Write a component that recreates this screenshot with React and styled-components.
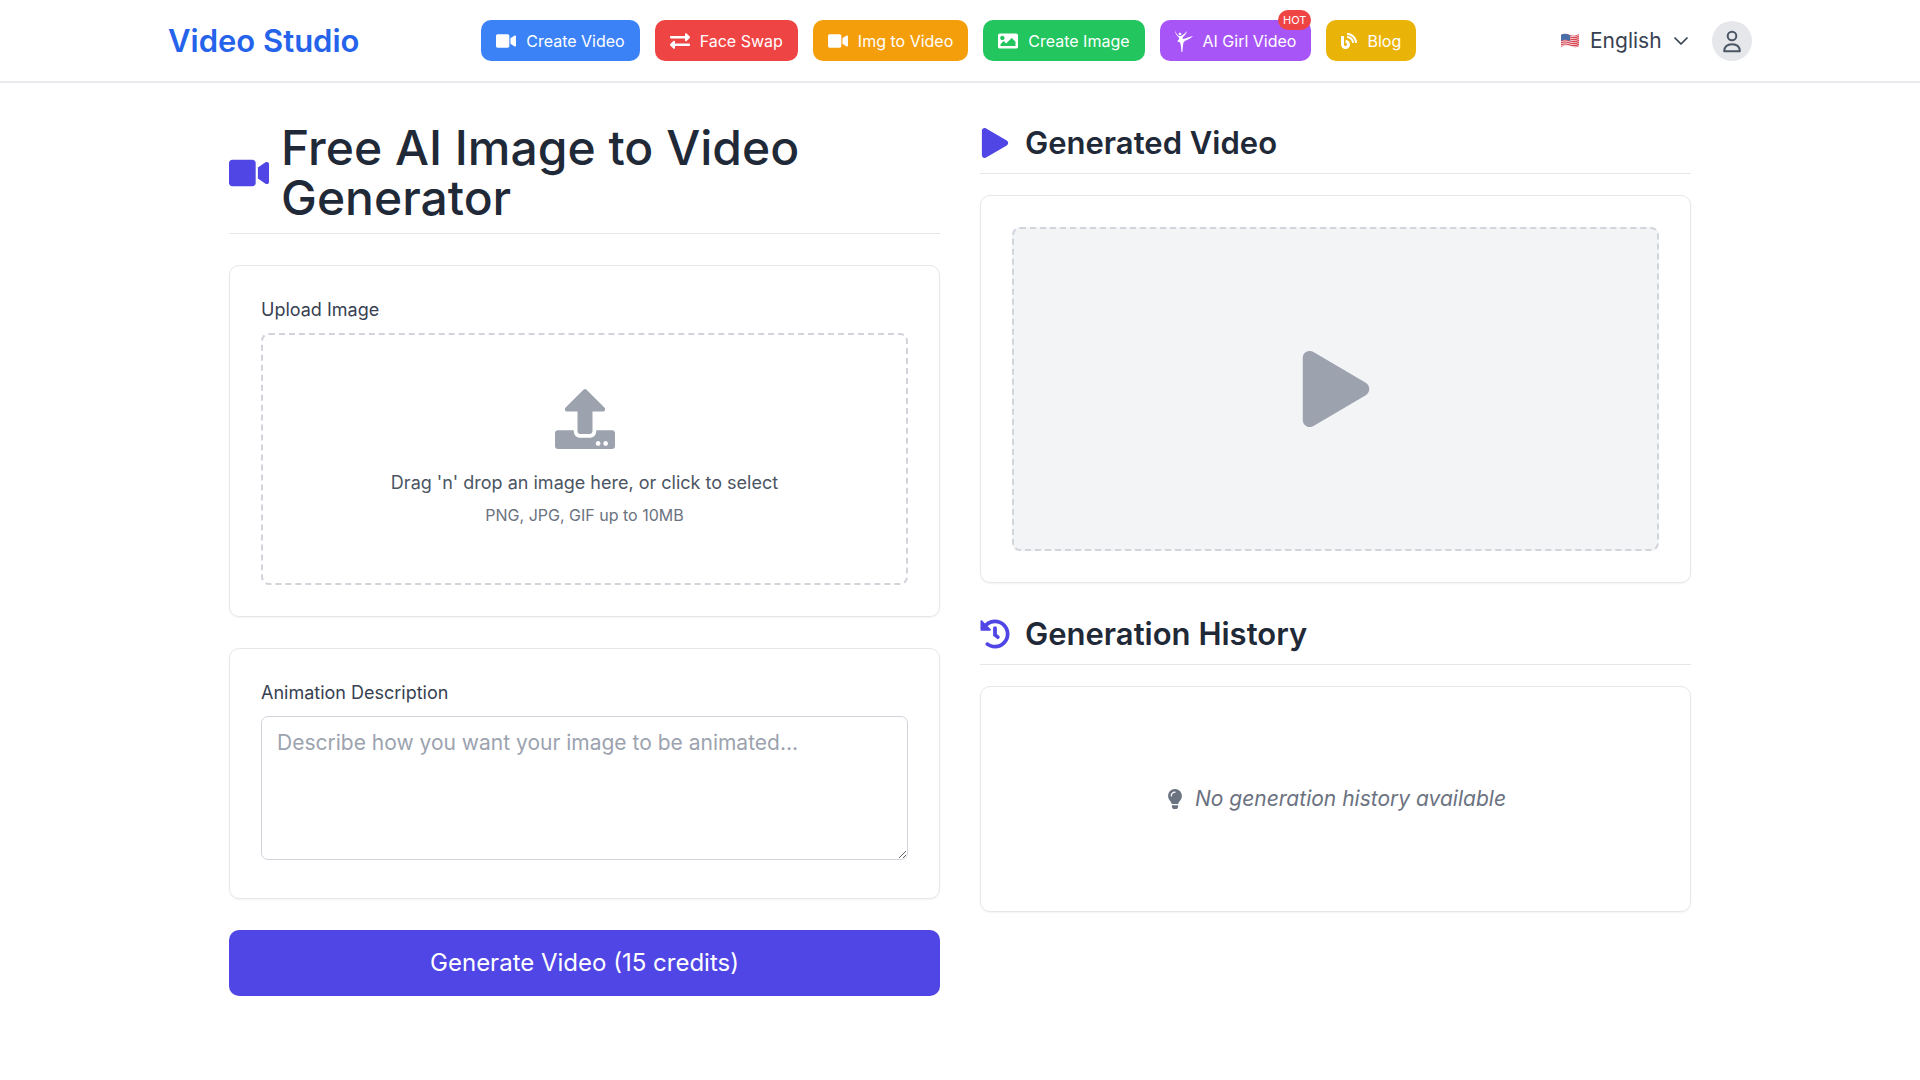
import React, { useState } from "react";
import styled, { createGlobalStyle } from "styled-components";
import {
  FaBlog,
  FaExchangeAlt,
  FaHistory,
  FaImage,
  FaLightbulb,
  FaPlay,
  FaUpload,
  FaVideo,
} from "react-icons/fa";

const navItems = [
  { label: "Create Video", icon: <FaVideo size={20} />, color: "#3b82f6" },
  { label: "Face Swap", icon: <FaExchangeAlt size={20} />, color: "#ef4444" },
  { label: "Img to Video", icon: <FaVideo size={20} />, color: "#f59e0b" },
  { label: "Create Image", icon: <FaImage size={20} />, color: "#22c55e" },
  { label: "AI Girl Video", icon: <DancerIcon />, color: "#a855f7", hot: true },
  { label: "Blog", icon: <FaBlog size={16} />, color: "#eab308" },
];

function DancerIcon() {
  return (
    <svg width="18" height="22" viewBox="0 0 54 66" fill="currentColor" aria-hidden="true">
      <circle cx="15" cy="12" r="4" />
      <path d="M0 1 C2 9 6 14 11 18 L18 18 C24 15 31 9 36 3 C34 11 29 17 23 22 L24 27 C33 25 43 21 54 18 C47 25 37 31 28 33 C29 36 27 38 25 38 C24 47 23 56 22 66 L19 66 C19 55 18 46 15 37 C12 37 9 35 7 32 C11 30 13 27 12 23 C5 17 0 10 0 1 Z" />
    </svg>
  );
}

function FlagIcon() {
  return (
    <svg width="20" height="16" viewBox="0 0 20 16" aria-hidden="true">
      <clipPath id="flag">
        <path d="M1 2 C4 0 7 1 10 2 S16 3 19 1 V13 C16 15 13 14 10 13 S4 12 1 14 Z" />
      </clipPath>
      <g clipPath="url(#flag)">
        <rect width="20" height="16" fill="#f3dde0" />
        <g fill="none" stroke="#d9434f" strokeWidth="1.1">
          <path d="M1 2 C4 0 7 1 10 2 S16 3 19 1" />
          <path d="M1 4 C4 2 7 3 10 4 S16 5 19 3" />
          <path d="M1 6 C4 4 7 5 10 6 S16 7 19 5" />
          <path d="M1 8 C4 6 7 7 10 8 S16 9 19 7" />
          <path d="M1 10 C4 8 7 9 10 10 S16 11 19 9" />
          <path d="M1 12 C4 10 7 11 10 12 S16 13 19 11" />
          <path d="M1 14 C4 12 7 13 10 14 S16 15 19 13" />
        </g>
        <path d="M1 1 C4 0 7 1 10 2 V8 C7 7 4 6 1 8 Z" fill="#4a6fa8" />
      </g>
    </svg>
  );
}

function UserIcon() {
  return (
    <svg width="24" height="24" viewBox="0 0 24 24" fill="none" stroke="currentColor" strokeWidth="2" aria-hidden="true">
      <circle cx="12" cy="7" r="4.3" />
      <path d="M4.2 22.2 C4.2 17.8 7.2 15.2 12 15.2 S19.8 17.8 19.8 22.2 Z" strokeLinejoin="round" />
    </svg>
  );
}

function Header() {
  return (
    <TopBar>
      <TopBarInner>
        <Logo href="#">Video Studio</Logo>
        <Nav>
          {navItems.map((item) => (
            <NavLink key={item.label} href="#" $color={item.color}>
              {item.icon}
              {item.label}
              {item.hot && <HotBadge>HOT</HotBadge>}
            </NavLink>
          ))}
        </Nav>
        <Account>
          <Language>
            <FlagIcon />
            <LanguageSelect aria-label="Language" defaultValue="en">
              <option value="en">English</option>
            </LanguageSelect>
            <svg width="14" height="8" viewBox="0 0 14 8" fill="none" stroke="currentColor" strokeWidth="1.7" strokeLinecap="round" strokeLinejoin="round" aria-hidden="true">
              <path d="M1 1 L7 7 L13 1" />
            </svg>
          </Language>
          <UserBtn type="button" aria-label="Account">
            <UserIcon />
          </UserBtn>
        </Account>
      </TopBarInner>
    </TopBar>
  );
}

export default function App() {
  const [description, setDescription] = useState("");

  return (
    <>
      <GlobalStyle />
      <Header />
      <Main>
        <Column>
          <PageTitle>
            <FaVideo size={40} />
            <span>Free AI Image to Video Generator</span>
          </PageTitle>
          <Card>
            <Label htmlFor="image">Upload Image</Label>
            <DropZone htmlFor="image">
              <FaUpload size={60} />
              <DropText>Drag 'n' drop an image here, or click to select</DropText>
              <DropHint>PNG, JPG, GIF up to 10MB</DropHint>
              <FileInput id="image" type="file" accept="image/*" />
            </DropZone>
          </Card>
          <Card>
            <Label htmlFor="description">Animation Description</Label>
            <Description
              id="description"
              placeholder="Describe how you want your image to be animated..."
              value={description}
              onChange={(e) => setDescription(e.target.value)}
            />
          </Card>
          <GenerateBtn type="button">Generate Video (15 credits)</GenerateBtn>
        </Column>
        <Column>
          <Section>
            <SectionTitle>
              <FaPlay size={30} />
              Generated Video
            </SectionTitle>
            <Card>
              <Preview>
                <FaPlay size={76} />
              </Preview>
            </Card>
          </Section>
          <Section>
            <SectionTitle>
              <FaHistory size={30} />
              Generation History
            </SectionTitle>
            <Card>
              <EmptyState>
                <FaLightbulb size={20} />
                <em>No generation history available</em>
              </EmptyState>
            </Card>
          </Section>
        </Column>
      </Main>
    </>
  );
}

const GlobalStyle = createGlobalStyle`
  * {
    box-sizing: border-box;
  }

  body {
    margin: 0;
    background: #fff;
    color: #1f2937;
    font-family: Inter, "Liberation Sans", sans-serif;
  }

  svg {
    flex-shrink: 0;
  }
`;

const TopBar = styled.header`
  border-bottom: 2px solid #e9ebee;
`;

const TopBarInner = styled.div`
  max-width: 1624px;
  margin: 0 auto;
  padding: 20px;
  display: flex;
  align-items: center;
  justify-content: space-between;
`;

const Logo = styled.a`
  color: #2563eb;
  font-size: 31px;
  font-weight: 600;
  line-height: 41px;
  text-decoration: none;
`;

const Nav = styled.nav`
  display: flex;
  gap: 15px;
`;

const NavLink = styled.a`
  position: relative;
  display: flex;
  align-items: center;
  gap: 10px;
  height: 41px;
  padding: 0 15px;
  border-radius: 10px;
  background: ${(props) => props.$color};
  color: #fff;
  font-size: 16px;
  text-decoration: none;
`;

const HotBadge = styled.span`
  position: absolute;
  top: -10px;
  right: 0;
  padding: 0 5px;
  border-radius: 10px;
  background: #ef4444;
  font-size: 11px;
  line-height: 20px;
`;

const Account = styled.div`
  display: flex;
  align-items: center;
  gap: 4px;
`;

const Language = styled.label`
  display: flex;
  align-items: center;
  padding: 0 20px 0 22px;
  color: #374151;
`;

const LanguageSelect = styled.select`
  appearance: none;
  margin: 0 12px 0 10px;
  padding: 0;
  border: none;
  background: none;
  color: inherit;
  font: inherit;
  font-size: 21px;
  cursor: pointer;
`;

const UserBtn = styled.button`
  display: grid;
  place-items: center;
  width: 40px;
  height: 40px;
  padding: 0;
  border: none;
  border-radius: 50%;
  background: #e5e7eb;
  color: #4b5563;
  cursor: pointer;
`;

const Main = styled.main`
  max-width: 1502px;
  margin: 0 auto;
  padding: 40px 20px;
  display: grid;
  grid-template-columns: repeat(2, 1fr);
  align-items: start;
  gap: 40px;
`;

const Column = styled.div`
  display: flex;
  flex-direction: column;
  gap: 31px;
`;

const Section = styled.section`
  display: flex;
  flex-direction: column;
  gap: 21px;
`;

const PageTitle = styled.h1`
  display: flex;
  align-items: center;
  gap: 12px;
  margin: 0;
  padding-bottom: 10px;
  border-bottom: 1px solid #e5e7eb;
  font-size: 48px;
  font-weight: 500;
  line-height: 50px;

  & svg {
    color: #4f46e5;
  }
`;

const SectionTitle = styled.h2`
  display: flex;
  align-items: center;
  gap: 15px;
  margin: 0;
  padding-bottom: 10px;
  border-bottom: 1px solid #e5e7eb;
  font-size: 31px;
  font-weight: 600;
  line-height: 40px;

  & svg {
    color: #4f46e5;
  }
`;

const Card = styled.div`
  padding: 31px;
  border: 1px solid #e5e7eb;
  border-radius: 10px;
  box-shadow: 0 1px 2px rgba(0, 0, 0, 0.05);
`;

const Label = styled.label`
  display: block;
  margin-bottom: 10px;
  color: #374151;
  font-size: 18px;
  line-height: 26px;
`;

const DropZone = styled.label`
  display: flex;
  flex-direction: column;
  align-items: center;
  padding: 54px 20px 56px;
  border: 2px dashed #d1d5db;
  border-radius: 8px;
  color: #9ca3af;
  cursor: pointer;
`;

const DropText = styled.span`
  margin-top: 20px;
  color: #4b5563;
  font-size: 18px;
  line-height: 27px;
`;

const DropHint = styled.span`
  margin-top: 7px;
  color: #6b7280;
  font-size: 16px;
  line-height: 24px;
`;

const FileInput = styled.input`
  position: absolute;
  width: 1px;
  height: 1px;
  opacity: 0;
`;

const Description = styled.textarea`
  display: block;
  width: 100%;
  height: 144px;
  margin-bottom: 7px;
  padding: 11px 15px;
  border: 1px solid #d1d5db;
  border-radius: 7px;
  color: inherit;
  font: inherit;
  font-size: 21px;
  line-height: 30px;
  resize: vertical;

  &::placeholder {
    color: #9ca3af;
  }
`;

const GenerateBtn = styled.button`
  padding: 18px 30px;
  border: none;
  border-radius: 10px;
  background: #4f46e5;
  color: #fff;
  font: inherit;
  font-size: 24px;
  line-height: 30px;
  cursor: pointer;
`;

const Preview = styled.div`
  display: grid;
  place-items: center;
  aspect-ratio: 2 / 1;
  border: 2px dashed #d1d5db;
  border-radius: 8px;
  background: #f3f4f6;
  color: #9ca3af;
`;

const EmptyState = styled.p`
  display: flex;
  align-items: center;
  justify-content: center;
  gap: 10px;
  margin: 0;
  padding: 66px 0;
  color: #6b7280;
  font-size: 21px;
  line-height: 30px;
`;
